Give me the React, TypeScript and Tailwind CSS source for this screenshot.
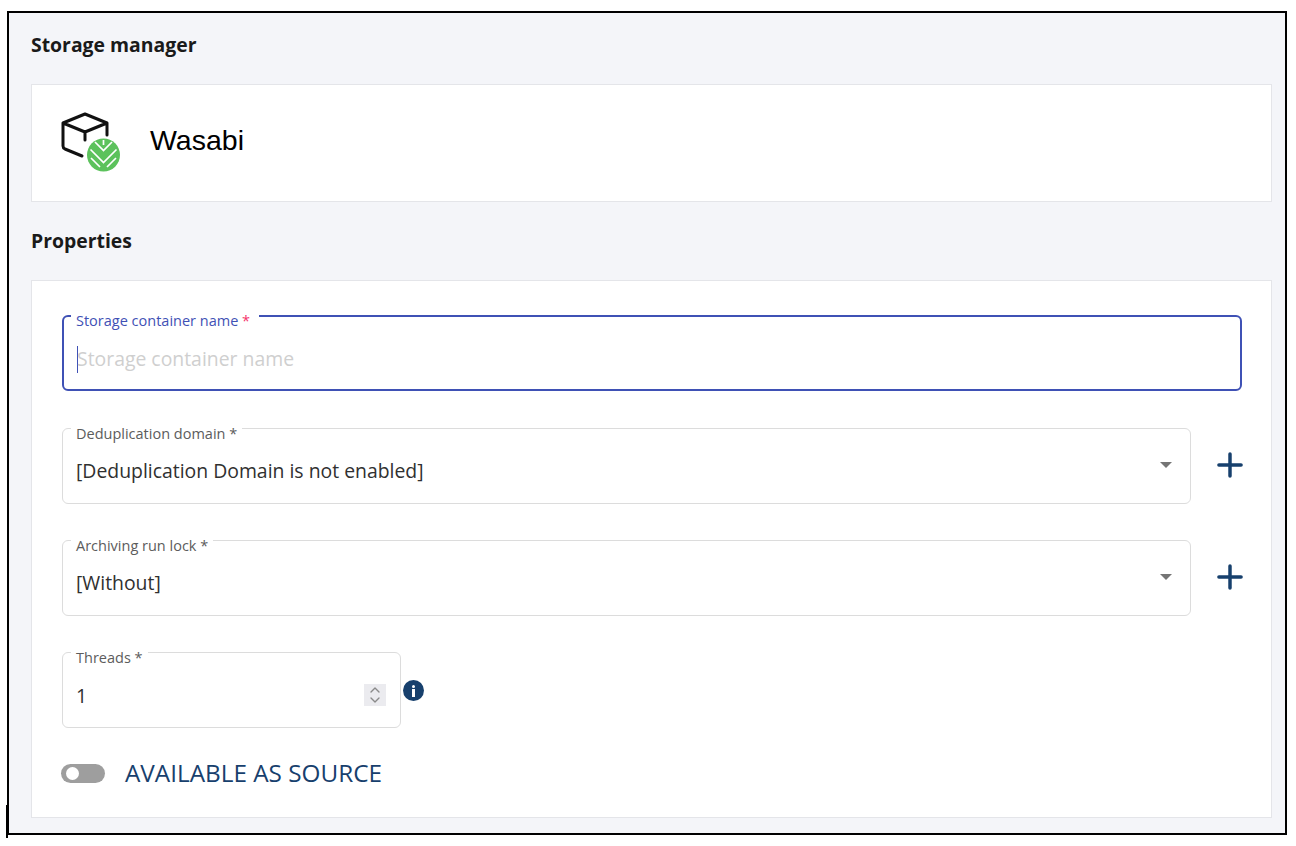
import React from 'react';
import { ChevronDown, ChevronUp, Plus } from 'lucide-react';

const WasabiIcon = () => (
  <svg width="62" height="62" viewBox="0 0 62 62" fill="none">
    {/* box */}
    <path
      d="M22 44 L5 37 Q3 36 3 34 V11 L25 2 L47 11 V23 M3 11 L25 20 L47 11 M25 20 V28"
      stroke="#111111"
      strokeWidth="3"
      strokeLinecap="round"
      strokeLinejoin="round"
    />
    {/* wasabi mark */}
    <circle cx="43.5" cy="43" r="16.5" fill="#5cc25c" />
    <path
      d="M35 30 L43.5 38.5 L52 30 M30.5 37.5 L43.5 50.5 L56.5 37.5 M31 46 L40 55 M56 46 L47 55 M43.5 28 V33"
      stroke="#ffffff"
      strokeWidth="1.7"
      strokeLinecap="butt"
    />
  </svg>
);

const Caret = () => <div className="w-0 h-0 border-x-[6px] border-x-transparent border-t-[6px] border-t-[#757575]" />;

const AddButton = () => (
  <button className="w-[26px] h-[26px] flex items-center justify-center text-[#17406d]">
    <Plus size={38} strokeWidth={2.2} className="shrink-0" />
  </button>
);

const SelectField = ({ label, value }: { label: string; value: string }) => (
  <div className="flex items-start">
    <div className="relative w-[1129px] h-[76px] border border-[#dcdcdc] rounded-md bg-white flex items-center justify-between pl-[13px] pr-[18px]">
      <span className="absolute -top-[4px] left-[8px] bg-white px-[5px] text-[14.5px] leading-[17px] text-[#5c5c5c]">{label}</span>
      <span className="text-[19.4px] text-[#303030] mt-[10px]">{value}</span>
      <div className="-mt-[2px]">
        <Caret />
      </div>
    </div>
    <div className="ml-[26px] mt-[24px]">
      <AddButton />
    </div>
  </div>
);

export default function App() {
  return (
    <div className="min-h-[846px] bg-white pt-[11px] pl-[7px] relative">
      <div className="w-[1280px] h-[824px] border-2 border-black bg-[#f4f5f9] pl-[22px] pr-[13px] font-['Open_Sans',sans-serif]">
        <h2 className="mt-[19px] h-[26px] leading-[26px] text-[19.4px] font-bold text-[#1a1a1a]">Storage manager</h2>

        <div className="mt-[26px] h-[118px] bg-white border border-[#e4e5e9] flex items-center pl-[28px]">
          <WasabiIcon />
          <span className="ml-[28px] -mt-[5px] text-[28.5px] text-black font-['Liberation_Sans',sans-serif]">Wasabi</span>
        </div>

        <h2 className="mt-[26px] h-[26px] leading-[26px] text-[19.4px] font-bold text-[#1a1a1a]">Properties</h2>

        <div className="mt-[26px] h-[538px] bg-white border border-[#e4e5e9] pl-[30px] pt-[34px]">
          <div className="relative w-[1180px] h-[76px] border-2 border-[#3f51b5] rounded-md flex items-center pl-[13px]">
            <span className="absolute -top-[5px] left-[7px] bg-white px-[5px] pr-[9px] text-[14.5px] leading-[17px] text-[#3f51b5]">
              Storage container name <span className="text-[#f5346b]">*</span>
            </span>
            <div className="w-px h-[27px] bg-[#3f51b5] mt-[12px] -mr-[1px]" />
            <span className="text-[19.4px] text-[#cfcfcf] mt-[12px]">Storage container name</span>
          </div>

          <div className="mt-[37px] flex flex-col gap-[36px]">
            <SelectField label="Deduplication domain *" value="[Deduplication Domain is not enabled]" />
            <SelectField label="Archiving run lock *" value="[Without]" />
          </div>

          <div className="mt-[36px] flex items-start">
            <div className="relative w-[339px] h-[76px] border border-[#dcdcdc] rounded-md bg-white flex items-center justify-between pl-[13px] pr-[14px]">
              <span className="absolute -top-[4px] left-[8px] bg-white px-[5px] text-[14.5px] leading-[17px] text-[#5c5c5c]">Threads *</span>
              <span className="text-[19.4px] text-[#303030] mt-[12px]">1</span>
              <div className="w-[22px] h-[22px] bg-[#ebebef] flex flex-col items-center justify-center mt-[9px] text-[#8a8a8a]">
                <ChevronUp size={16} strokeWidth={2} className="-my-[3px]" />
                <ChevronDown size={16} strokeWidth={2} className="-my-[3px]" />
              </div>
            </div>
            <div className="ml-[2px] mt-[28px] w-[21px] h-[21px] rounded-full bg-[#17406d] flex flex-col items-center justify-center">
              <div className="w-[3px] h-[3px] bg-white rounded-full" />
              <div className="w-[3px] h-[8px] bg-white mt-px" />
            </div>
          </div>

          <div className="mt-[32px] flex items-center">
            <div className="w-[44px] h-[19px] rounded-full bg-[#9e9e9e] flex items-center pl-[5px] -ml-px">
              <div className="w-[13px] h-[13px] rounded-full bg-white" />
            </div>
            <span className="ml-[20px] text-[24.3px] leading-[26px] text-[#17406d]">AVAILABLE AS SOURCE</span>
          </div>
        </div>
      </div>
      <div className="absolute left-[6px] top-[805px] w-[2px] h-[33px] bg-black" />
    </div>
  );
}
